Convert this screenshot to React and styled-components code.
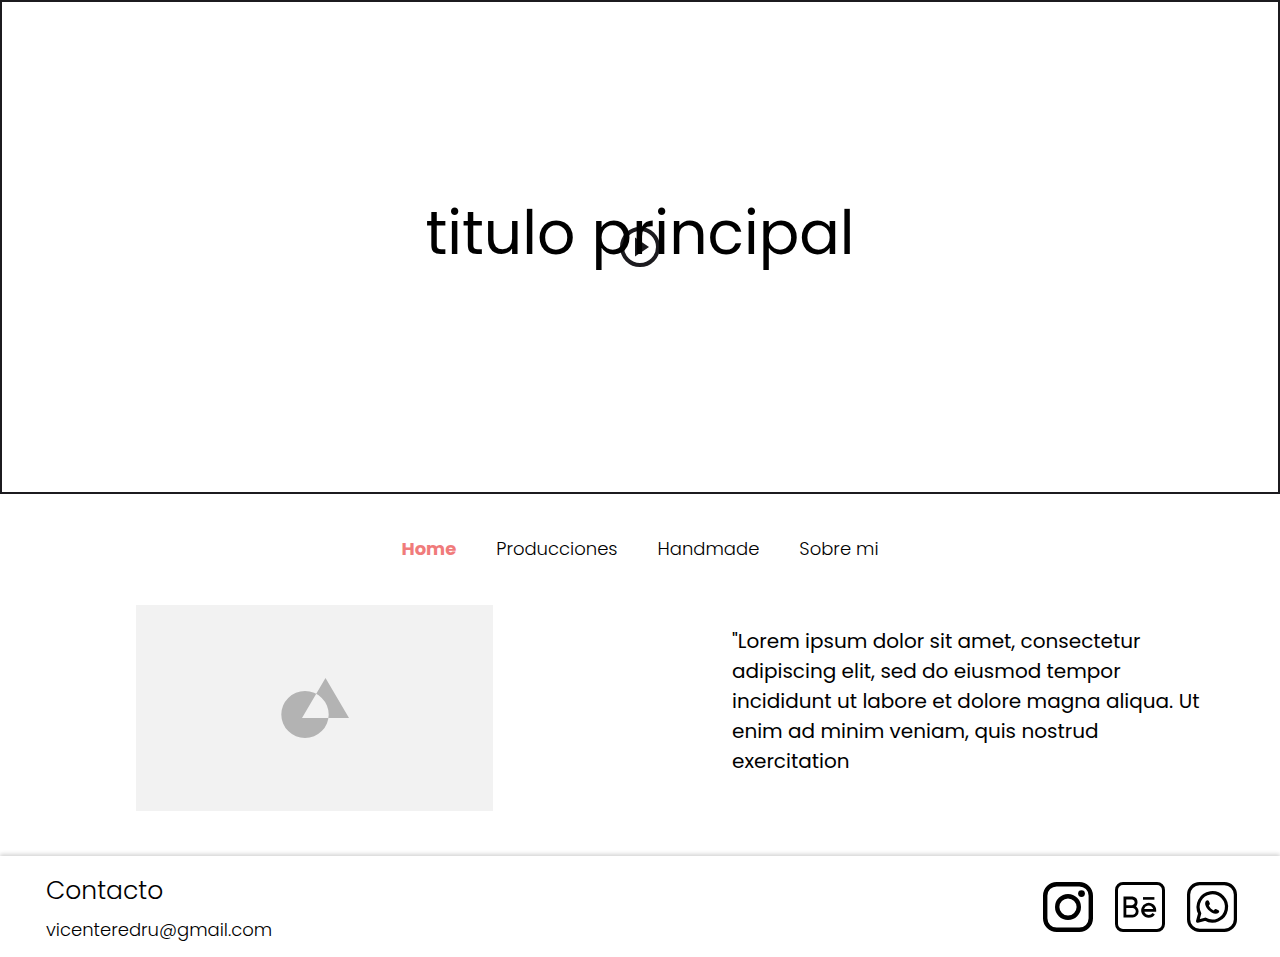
import React from "react";
import styled, { createGlobalStyle } from "styled-components";

const GlobalStyle = createGlobalStyle`
  *, *::before, *::after { box-sizing: border-box; }
  body {
    margin: 0;
    background: #fff;
    color: #000;
    font-family: Poppins, Inter, sans-serif;
  }
  h1, h2, p { margin: 0; font-weight: 400; }
  a { color: inherit; text-decoration: none; }
`;

const Page = styled.div`
  display: flex;
  flex-direction: column;
  min-height: 100vh;
`;

const Hero = styled.header`
  position: relative;
  display: flex;
  justify-content: center;
  align-items: flex-start;
  min-height: 494px;
  padding-top: 183px;
  border: 2px solid #1c1b1f;
`;

const Title = styled.h1`
  position: relative;
  font-size: 60px;
  line-height: 96px;
  text-align: center;
  white-space: nowrap;
  pointer-events: none;
`;

const PlayButton = styled.button`
  position: absolute;
  inset: 0;
  margin: auto;
  width: 48px;
  height: 48px;
  padding: 0;
  border: 0;
  background: none;
  color: #1c1b1f;
  cursor: pointer;

  svg { display: block; }
`;

const Nav = styled.nav`
  display: flex;
  justify-content: center;
  gap: 40px;
  padding: 41px 24px 43px;
`;

const NavLink = styled.a`
  font-size: 18px;
  line-height: 27px;
  font-weight: ${({ $active }) => ($active ? 700 : 300)};
  color: ${({ $active }) => ($active ? "#f07b7b" : "#000")};
`;

const Intro = styled.main`
  display: flex;
  justify-content: space-between;
  padding: 0 68px 45px 136px;
`;

const Placeholder = styled.div`
  display: flex;
  justify-content: center;
  align-items: center;
  width: 357px;
  height: 206px;
  background: #f2f2f2;
`;

const Quote = styled.p`
  width: 480px;
  padding-top: 21px;
  font-size: 20px;
  line-height: 30px;
`;

const Footer = styled.footer`
  display: flex;
  flex: 1;
  justify-content: space-between;
  align-items: flex-start;
  padding: 15px 43px 12px 46px;
  background: #fff;
  box-shadow: 0 -2px 4px rgba(0, 0, 0, 0.17);
`;

const Contact = styled.div`
  display: flex;
  flex-direction: column;
  gap: 5px;
`;

const ContactTitle = styled.h2`
  font-size: 25px;
  line-height: 40px;
  font-weight: 300;
`;

const Email = styled.a`
  font-size: 18px;
  line-height: 27px;
  font-weight: 300;
`;

const Socials = styled.div`
  display: flex;
  gap: 22px;
  padding-top: 11px;
`;

const SocialLink = styled.a`
  display: block;
  width: 50px;
  height: 50px;

  svg { display: block; }
`;

const PlayIcon = () => (
  <svg width="48" height="48" viewBox="0 0 48 48" fill="none" aria-hidden="true">
    <circle cx="24" cy="24" r="18" stroke="currentColor" strokeWidth="4" />
    <path d="M19 33.5V14.5L33 24Z" fill="currentColor" />
  </svg>
);

const ShapesIcon = () => (
  <svg width="68" height="60" viewBox="0 0 68 60" aria-hidden="true">
    <path
      fill="#b3b3b3"
      fillRule="evenodd"
      d="M24 13a23.7 23.5 0 1 0 0 47a23.7 23.5 0 1 0 0-47ZM44.5 0L68 40H21Z"
    />
  </svg>
);

const InstagramIcon = () => (
  <svg width="50" height="50" viewBox="0 0 50 50" fill="none" stroke="#000" aria-hidden="true">
    <rect x="2.2" y="2.2" width="45.6" height="45.6" rx="11.5" strokeWidth="4.4" />
    <circle cx="25" cy="25" r="10.8" strokeWidth="4.4" />
    <circle cx="38.5" cy="11.6" r="3.4" fill="#000" stroke="none" />
  </svg>
);

const BehanceIcon = () => (
  <svg width="50" height="50" viewBox="0 0 50 50" fill="none" stroke="#000" aria-hidden="true">
    <rect x="1.5" y="1.5" width="47" height="47" rx="6.5" strokeWidth="3" />
    <path
      strokeWidth="2.8"
      strokeLinejoin="miter"
      d="M9.9 24.7H17.4M17.4 24.7A4.4 4.4 0 0 0 17.4 16H9.9V34.1H17.6A4.7 4.7 0 0 0 17.4 24.7"
    />
    <path strokeWidth="2.6" d="M28 16.4H39.4" />
    <path strokeWidth="2.8" d="M27.6 28.4H39.8A6.1 6.1 0 1 0 38.7 31.8" />
  </svg>
);

const WhatsAppIcon = () => (
  <svg width="50" height="50" viewBox="0 0 50 50" fill="none" stroke="#000" aria-hidden="true">
    <rect x="1.6" y="1.6" width="46.8" height="46.8" rx="11" strokeWidth="3.2" />
    <path
      strokeWidth="3.2"
      strokeLinejoin="round"
      d="M10.6 39.2L12.7 31.4A14.2 14.2 0 1 1 18.2 37.2Z"
    />
    <path
      fill="#000"
      stroke="none"
      d="M19.2 18.8C20 17.9 21.4 18 21.8 19L22.8 21.3C23.1 22 22.4 22.9 21.8 23.5C22.8 25.7 24.5 27.4 26.7 28.4C27.4 27.7 28 26.7 28.9 27.1L31.4 28.3C32.5 28.8 32.4 29.9 31.6 30.7C29.8 32.4 27.3 31.9 25 30.7C22.1 29.2 19.8 26.9 18.7 24.1C17.9 22.1 17.9 20.1 19.2 18.8Z"
    />
  </svg>
);

const links = ["Home", "Producciones", "Handmade", "Sobre mi"];

const socials = [
  { label: "Instagram", Icon: InstagramIcon },
  { label: "Behance", Icon: BehanceIcon },
  { label: "WhatsApp", Icon: WhatsAppIcon },
];

export default function App() {
  return (
    <Page>
      <GlobalStyle />
      <Hero>
        <PlayButton type="button" aria-label="Reproducir">
          <PlayIcon />
        </PlayButton>
        <Title>titulo principal</Title>
      </Hero>
      <Nav>
        {links.map((link, index) => (
          <NavLink key={link} href="#" $active={index === 0}>
            {link}
          </NavLink>
        ))}
      </Nav>
      <Intro>
        <Placeholder>
          <ShapesIcon />
        </Placeholder>
        <Quote>
          "Lorem ipsum dolor sit amet, consectetur adipiscing elit, sed do eiusmod tempor
          incididunt ut labore et dolore magna aliqua. Ut enim ad minim veniam, quis nostrud
          exercitation
        </Quote>
      </Intro>
      <Footer>
        <Contact>
          <ContactTitle>Contacto</ContactTitle>
          <Email href="mailto:vicenteredru@gmail.com">vicenteredru@gmail.com</Email>
        </Contact>
        <Socials>
          {socials.map(({ label, Icon }) => (
            <SocialLink key={label} href="#" aria-label={label}>
              <Icon />
            </SocialLink>
          ))}
        </Socials>
      </Footer>
    </Page>
  );
}
